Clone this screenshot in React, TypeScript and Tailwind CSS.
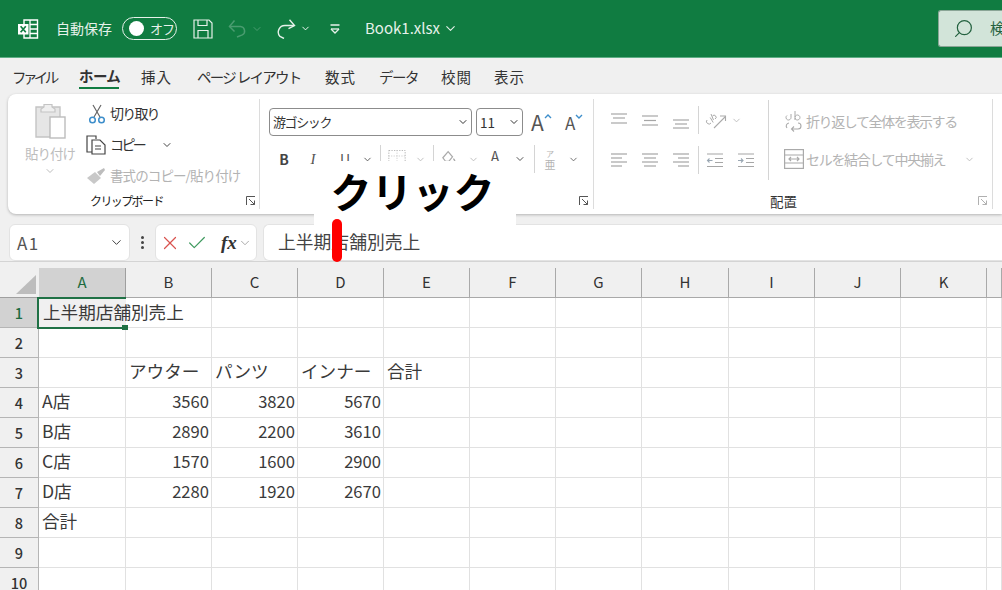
import { ChevronDown, Search, X, Check } from 'lucide-react';

const columns = ['A', 'B', 'C', 'D', 'E', 'F', 'G', 'H', 'I', 'J', 'K', ''];

const rows: Record<number, (string | number)[]> = {
  3: ['', 'アウター', 'パンツ', 'インナー', '合計'],
  4: ['A店', 3560, 3820, 5670],
  5: ['B店', 2890, 2200, 3610],
  6: ['C店', 1570, 1600, 2900],
  7: ['D店', 2280, 1920, 2670],
  8: ['合計'],
};

function Chev({ className = 'text-[#444]', size = 12 }: { className?: string; size?: number }) {
  return <ChevronDown size={size} strokeWidth={2} className={`shrink-0 ${className}`} />;
}

function ExcelLogo() {
  return (
    <svg width="22" height="20" viewBox="0 0 22 20" fill="none" className="shrink-0">
      <path d="M7 1h13.5v18H7z" stroke="#fff" strokeWidth="1.4" />
      <path d="M13 1v18M13 5.5h7.5M13 10h7.5M13 14.5h7.5" stroke="#fff" strokeWidth="1.3" />
      <rect x="1" y="5" width="10.5" height="10.5" fill="#fff" />
      <path d="M3.6 7.3l5.2 6M8.8 7.3l-5.2 6" stroke="#107c41" strokeWidth="1.7" />
    </svg>
  );
}

function LinesIcon({ ys, xs }: { ys: number[]; xs: [number, number][] }) {
  return (
    <svg width="18" height="18" viewBox="0 0 18 18" className="shrink-0">
      {ys.map((y, i) => (
        <path key={i} d={`M${xs[i][0]} ${y}H${xs[i][1]}`} stroke="#a6a6a6" strokeWidth="1.2" />
      ))}
    </svg>
  );
}

function IndentIcon({ right }: { right?: boolean }) {
  return (
    <svg width="18" height="18" viewBox="0 0 18 18" fill="none" className="shrink-0">
      <path d="M1 3h16M9 7.5h8M9 11.5h8M1 15.5h16" stroke="#a6a6a6" strokeWidth="1.2" />
      <path d={right ? 'M1 9.5h5M4 7.5l2 2-2 2' : 'M1.5 9.5h5M3.5 7.5l-2 2 2 2'} stroke="#9aa7b3" strokeWidth="1.1" />
    </svg>
  );
}

function Launcher({ muted }: { muted?: boolean }) {
  const c = muted ? '#b0b0b0' : '#555';
  return (
    <svg width="10" height="10" viewBox="0 0 10 10" fill="none" className="shrink-0">
      <path d="M.5 9V.5H9" stroke={c} />
      <path d="M3 3l5.5 5.5M8.5 4.5v4h-4" stroke={c} />
    </svg>
  );
}

function Sep({ h = 'h-[28px]' }: { h?: string }) {
  return <div className={`w-px shrink-0 bg-[#d4d4d4] ${h}`} />;
}

function GroupLine() {
  return <div className="my-[5px] w-px shrink-0 bg-[#dcdcdc]" />;
}

function TitleBar() {
  return (
    <div className="flex h-[58px] items-center border-b border-[#5fae85] bg-[#107c41] text-[#e6f1ea]">
      <div className="ml-[17px]">
        <ExcelLogo />
      </div>
      <span className="ml-[17px] w-[58px] whitespace-nowrap text-[14px]">自動保存</span>
      <div className="ml-[8px] flex h-[23px] w-[55px] items-center rounded-full border border-[#e6f1ea] pl-[6px]">
        <span className="h-[15px] w-[15px] shrink-0 rounded-full bg-white" />
        <span className="ml-[6px] whitespace-nowrap text-[13px] leading-none tracking-[-1px]">オフ</span>
      </div>
      <svg width="20" height="20" viewBox="0 0 20 20" fill="none" className="ml-[16px]" stroke="#e6f1ea" strokeWidth="1.2">
        <path d="M1 1h15l3 3v15H1z" />
        <path d="M5 1v5.5h9V1M5 19v-7.5h10V19" />
      </svg>
      <svg width="19" height="19" viewBox="0 0 19 19" fill="none" className="ml-[15px]" stroke="#4a9c70" strokeWidth="1.5">
        <path d="M1.5 7.5h11a4.5 4.5 0 0 1 1.8 8.4L9 18" />
        <path d="M6.5 1.5l-5 6 5 5" />
      </svg>
      <Chev className="ml-[4px] text-[#4a9c70]" />
      <svg width="20" height="20" viewBox="0 0 20 20" fill="none" className="ml-[13px]" stroke="#e6f1ea" strokeWidth="1.4">
        <path d="M18 6.5H9a6.6 6.6 0 0 0-5 11l4 2" />
        <path d="M13.5 .8l5 5.7-6 3.2" />
      </svg>
      <Chev className="ml-[4px] text-white" size={11} />
      <svg width="12" height="12" viewBox="0 0 12 12" fill="none" className="ml-[18px]" stroke="#e6f1ea" strokeWidth="1.3">
        <path d="M1.5 2h9M2 6l4 4 4-4" />
        <path d="M2 6h8" />
      </svg>
      <span className="ml-[24px] text-[15px]">Book1.xlsx</span>
      <ChevronDown size={15} strokeWidth={1.7} className="ml-[3px]" />
      <div className="ml-auto flex h-[37px] w-[64px] items-center overflow-hidden rounded-l-[3px] border border-r-0 border-[#8aa596] bg-[#d2e4d9] pl-[14px] text-[#23613f]">
        <Search size={21} strokeWidth={1.4} className="shrink-0 -scale-x-100" />
        <span className="ml-[16px] whitespace-nowrap text-[15px]">検索</span>
      </div>
    </div>
  );
}

function Tabs() {
  const tabs = [
    { label: 'ファイル', w: 'w-[45px]', ml: 'ml-[12px]', t: 'tracking-[-3.6px]' },
    { label: 'ホーム', w: 'w-[40px]', ml: 'ml-[22px]', t: 'font-bold tracking-[-0.6px]', active: true },
    { label: '挿入', w: 'w-[31px]', ml: 'ml-[22px]', t: 'tracking-[1px]' },
    { label: 'ページ レイアウト', w: 'w-[103px]', ml: 'ml-[25px]', t: 'tracking-[-1.7px]' },
    { label: '数式', w: 'w-[31px]', ml: 'ml-[25px]', t: 'tracking-[1px]' },
    { label: 'データ', w: 'w-[38px]', ml: 'ml-[23px]', t: 'tracking-[-1.5px]' },
    { label: '校閲', w: 'w-[31px]', ml: 'ml-[24px]', t: 'tracking-[1px]' },
    { label: '表示', w: 'w-[31px]', ml: 'ml-[22px]', t: 'tracking-[1px]' },
  ];
  return (
    <div className="flex h-[36px] items-center pt-px text-[#333]">
      {tabs.map((t) => (
        <div
          key={t.label}
          className={`flex h-[24px] shrink-0 items-center whitespace-nowrap text-[14.5px] ${t.w} ${t.ml} ${t.t} ${
            t.active ? 'border-b-2 border-[#107c41]' : ''
          }`}
        >
          {t.label}
        </div>
      ))}
    </div>
  );
}

function ClipboardGroup() {
  return (
    <div className="flex h-full w-[251px] shrink-0 flex-col">
      <div className="flex h-[91px]">
        <div className="ml-[17px] mt-[9px] flex w-[50px] flex-col items-center">
          <svg width="34" height="36" viewBox="0 0 34 36" fill="none">
            <path d="M3 4h24v30H3z" fill="#e6e6e6" stroke="#c4c4c4" strokeWidth="1.4" />
            <path d="M11 4V1.5h8V4l3 2v3H8V6z" fill="#efefef" stroke="#c4c4c4" strokeWidth="1.2" />
            <rect x="17" y="14" width="15" height="21" fill="#fff" stroke="#bcbcbc" strokeWidth="1.4" />
          </svg>
          <span className="mt-[5px] whitespace-nowrap text-[13.5px] leading-[18px] tracking-[-1px] text-[#bdbdbd]">貼り付け</span>
          <Chev className="mt-[3px] text-[#bdbdbd]" />
        </div>
        <div className="ml-[11px] flex flex-col pt-[4px]">
          <div className="flex h-[31px] shrink-0 items-center">
            <svg width="18" height="20" viewBox="0 0 18 20" fill="none" className="ml-[2px]">
              <path d="M5 1l7 12M13 1L6 13" stroke="#666" strokeWidth="1.2" />
              <circle cx="4.5" cy="16" r="2.8" stroke="#3d8ecb" strokeWidth="1.5" />
              <circle cx="13.5" cy="16" r="2.8" stroke="#3d8ecb" strokeWidth="1.5" />
            </svg>
            <span className="ml-[4px] whitespace-nowrap text-[14px] tracking-[-1.8px] text-[#333]">切り取り</span>
          </div>
          <div className="flex h-[31px] shrink-0 items-center">
            <svg width="20" height="20" viewBox="0 0 20 20" fill="none" stroke="#444" strokeWidth="1.2">
              <path d="M6 17H1V1h9v3" />
              <path d="M6 5h8l5 5v9H6z" />
              <path d="M9 11h6M9 14h6" />
            </svg>
            <span className="ml-[4px] w-[36px] whitespace-nowrap text-[14px] tracking-[-2.6px] text-[#333]">コピー</span>
            <Chev className="ml-[15px] text-[#444]" />
          </div>
          <div className="flex h-[31px] shrink-0 items-center">
            <svg width="20" height="18" viewBox="0 0 20 18" fill="none">
              <path d="M1 11l8-6 6 6-7 6z" fill="#c8c8c8" />
              <path d="M11 5l7-4 1 2-5 6z" fill="#bdbdbd" />
            </svg>
            <span className="ml-[4px] whitespace-nowrap text-[13.5px] tracking-[-0.9px] text-[#b3b3b3]">書式のコピー/貼り付け</span>
          </div>
        </div>
      </div>
      <div className="flex flex-1 items-center pt-[2px]">
        <span className="ml-[82px] whitespace-nowrap text-[12px] tracking-[-1.6px] text-[#222]">クリップボード</span>
        <div className="ml-auto mr-[3px]">
          <Launcher />
        </div>
      </div>
    </div>
  );
}

function FontGroup() {
  return (
    <div className="flex h-full w-[333px] shrink-0 flex-col">
      <div className="flex h-[91px] flex-col">
        <div className="ml-[9px] mt-[14px] flex h-[28px] items-center">
          <div className="flex h-[28px] w-[203px] items-center justify-between rounded-[4px] border border-[#8c8c8c] pl-[3px] pr-[2px]">
            <span className="text-[13px] tracking-[-1.4px] text-[#333]">游ゴシック</span>
            <Chev className="text-[#333]" />
          </div>
          <div className="ml-[4px] flex h-[28px] w-[47px] items-center justify-between rounded-[4px] border border-[#8c8c8c] pl-[3px] pr-[2px]">
            <span className="text-[13.5px] text-[#333]">11</span>
            <Chev className="text-[#333]" />
          </div>
          <div className="ml-[8px] flex w-[22px] items-start text-[#555]">
            <span className="text-[21px] leading-none">A</span>
            <svg width="8" height="6" viewBox="0 0 8 6" fill="none" className="mt-[2px]"><path d="M1 4l3-3 3 3" stroke="#3d8ecb" strokeWidth="1.4" /></svg>
          </div>
          <div className="ml-[12px] flex w-[19px] items-start text-[#555]">
            <span className="text-[17px] leading-none">A</span>
            <svg width="8" height="6" viewBox="0 0 8 6" fill="none"><path d="M1 1l3 3 3-3" stroke="#3d8ecb" strokeWidth="1.4" /></svg>
          </div>
        </div>
        <div className="ml-[16px] mt-[9px] flex h-[28px] items-center">
          <span className="w-[16px] shrink-0 text-center text-[14px] font-bold text-[#444]">B</span>
          <span className="ml-[14px] w-[14px] shrink-0 text-center font-['Liberation_Serif',serif] text-[15px] italic text-[#555]">I</span>
          <span className="ml-[17px] w-[16px] shrink-0 text-center text-[14px] text-[#555]">U</span>
          <Chev className="ml-[9px] text-[#555]" size={11} />
          <div className="ml-[7px]"><Sep /></div>
          <svg width="20" height="12" viewBox="0 0 20 14" fill="none" className="mb-[6px] ml-[6px] shrink-0">
            <rect x=".5" y=".5" width="19" height="13" stroke="#aaa" strokeDasharray="1.5 1.5" />
            <path d="M10 0v14M0 7h20" stroke="#ccc" strokeDasharray="1.5 1.5" />
          </svg>
          <Chev className="ml-[8px] text-[#bbb]" size={11} />
          <div className="ml-[7px]"><Sep /></div>
          <svg width="18" height="14" viewBox="0 0 18 16" fill="none" className="mb-[6px] ml-[6px] shrink-0">
            <path d="M2 10l6-7 5 6-4 5H5z" stroke="#aaa" strokeWidth="1.4" />
            <path d="M14 11c1.5 1.5 2 3 1 4" stroke="#aaa" strokeWidth="1.6" />
          </svg>
          <Chev className="ml-[10px] text-[#bbb]" size={11} />
          <span className="mb-[6px] ml-[9px] w-[14px] shrink-0 text-center text-[14px] leading-none text-[#555]">A</span>
          <Chev className="ml-[12px] text-[#555]" />
          <div className="ml-[8px]"><Sep /></div>
          <div className="ml-[7px] flex w-[16px] shrink-0 flex-col items-center text-[#b5b5b5]">
            <span className="text-[8px] leading-[9px]">ア</span>
            <span className="text-[11px] leading-[12px]">亜</span>
          </div>
          <Chev className="ml-[10px] text-[#666]" size={11} />
        </div>
      </div>
      <div className="flex flex-1 items-center pt-[2px]">
        <div className="ml-auto mr-[4px]">
          <Launcher />
        </div>
      </div>
    </div>
  );
}

function AlignGroup() {
  return (
    <div className="flex h-full w-[398px] shrink-0 flex-col">
      <div className="flex h-[91px]">
        <div className="ml-[16px] mt-[12px] flex flex-col gap-[12px]">
          <div className="flex h-[28px] items-center">
            <div className="flex w-[88px] items-center gap-[13px]">
              <LinesIcon ys={[3, 7, 12]} xs={[[1, 17], [3, 15], [1, 17]]} />
              <LinesIcon ys={[5, 9.5, 14]} xs={[[1, 17], [3, 15], [1, 17]]} />
              <LinesIcon ys={[9, 13, 17]} xs={[[1, 17], [3, 15], [1, 17]]} />
            </div>
            <Sep />
            <svg width="22" height="18" viewBox="0 0 22 18" fill="none" className="ml-[6px] shrink-0">
              <path d="M9 17L20 6M15 5h5.5v5" stroke="#aaa" strokeWidth="1.1" />
              <path d="M2 9a2.5 2.5 0 1 0 4 3M5.2 6.5l3 5M6 3l2.5 6M7.5 5a2 2 0 1 1 2.5 3" stroke="#aaa" strokeWidth="1" />
            </svg>
            <Chev className="ml-[4px] text-[#bbb]" size={11} />
          </div>
          <div className="flex h-[28px] items-center">
            <div className="flex w-[88px] items-center gap-[13px]">
              <LinesIcon ys={[3, 7, 11, 15]} xs={[[1, 17], [1, 12], [1, 17], [1, 12]]} />
              <LinesIcon ys={[3, 7, 11, 15]} xs={[[1, 17], [3, 15], [1, 17], [3, 15]]} />
              <LinesIcon ys={[3, 7, 11, 15]} xs={[[1, 17], [6, 17], [1, 17], [6, 17]]} />
            </div>
            <Sep />
            <div className="ml-[7px] flex items-center gap-[13px]">
              <IndentIcon />
              <IndentIcon right />
            </div>
          </div>
        </div>
        <div className="ml-[13px] mt-[6px] h-[80px] w-px shrink-0 bg-[#d4d4d4]" />
        <div className="ml-[15px] mt-[13px] flex flex-col gap-[10px]">
          <div className="flex h-[28px] items-center">
            <svg width="20" height="22" viewBox="0 0 20 22" fill="none" className="shrink-0">
              <path d="M3 5.5a2.5 2.5 0 1 0 4 2V4M11 1v9M11 7a2.5 2.5 0 1 1 0 1" stroke="#aaa" strokeWidth="1" />
              <path d="M14 13a3 3 0 0 1 0 6H8M10 16.5L7.5 19l2.5 2.5M5 13a3 3 0 0 0-2 5" stroke="#aaa" strokeWidth="1.1" />
            </svg>
            <span className="ml-[2px] whitespace-nowrap text-[14px] tracking-[-1.4px] text-[#b3b3b3]">折り返して全体を表示する</span>
          </div>
          <div className="flex h-[28px] items-center">
            <svg width="20" height="20" viewBox="0 0 20 20" fill="none" stroke="#aaa" strokeWidth="1.2" className="shrink-0">
              <rect x=".6" y=".6" width="18.8" height="18.8" />
              <path d="M.6 6h18.8M.6 14h18.8M5 10h10M7 8l-2 2 2 2M13 8l2 2-2 2" />
            </svg>
            <span className="ml-[2px] w-[158px] whitespace-nowrap text-[14px] tracking-[-1.3px] text-[#b3b3b3]">セルを結合して中央揃え</span>
            <Chev className="text-[#bbb]" size={11} />
          </div>
        </div>
      </div>
      <div className="flex flex-1 items-center pt-[3px]">
        <span className="ml-[176px] whitespace-nowrap text-[13.5px] text-[#333]">配置</span>
        <div className="ml-auto mr-[4px]">
          <Launcher muted />
        </div>
      </div>
    </div>
  );
}

function FormulaBar() {
  return (
    <div className="flex h-[37px] items-stretch">
      <div className="ml-[9px] flex w-[121px] items-center justify-between rounded-[6px] border border-[#e3e3e3] bg-white pl-[7px] pr-[5px]">
        <span className="text-[17px] tracking-[1.5px] text-[#555]">A1</span>
        <ChevronDown size={15} strokeWidth={1.5} className="text-[#333]" />
      </div>
      <div className="flex w-[25px] flex-col items-center justify-center gap-[2px]">
        <span className="h-[3px] w-[3px] rounded-full bg-[#444]" />
        <span className="h-[3px] w-[3px] rounded-full bg-[#444]" />
        <span className="h-[3px] w-[3px] rounded-full bg-[#444]" />
      </div>
      <div className="flex w-[102px] items-center rounded-[6px] border border-[#e3e3e3] bg-white pl-[3px]">
        <X size={22} strokeWidth={1.3} className="text-[#d9534f]" />
        <Check size={22} strokeWidth={1.3} className="ml-[5px] text-[#3f9a5f]" />
        <span className="ml-[13px] font-['Liberation_Serif',serif] text-[19px] font-bold italic leading-none text-[#333]">fx</span>
        <ChevronDown size={14} strokeWidth={1.4} className="ml-px text-[#999]" />
      </div>
      <div className="ml-[6px] flex flex-1 items-center rounded-l-[6px] border border-r-0 border-[#e3e3e3] bg-white pb-[2px] pl-[14px]">
        <span className="text-[17.8px] leading-none text-[#444]">上半期店舗別売上</span>
      </div>
    </div>
  );
}

function Sheet() {
  const rowNumbers = [1, 2, 3, 4, 5, 6, 7, 8, 9, 10];
  return (
    <div className="grid grid-cols-[39px_87px_86px_86px_86px_86px_86px_86px_87px_86px_86px_86px_15px] auto-rows-[30px]">
      <div className="flex items-end justify-end border-b border-[#9f9f9f] bg-[#f0f0f0] pb-[3px] pr-[3px]">
        <svg width="20" height="19" viewBox="0 0 20 19"><path d="M20 0v19H0z" fill="#bdbdbd" /></svg>
      </div>
      {columns.map((c, i) => (
        <div
          key={i}
          className={`flex items-center justify-center border-b border-r text-[15px] ${
            i === 0 ? 'border-[#9f9f9f] bg-[#d2d2d2] text-[#1d6b40]' : 'border-[#a9a9a9] bg-[#f0f0f0] text-[#333]'
          }`}
        >
          {c}
        </div>
      ))}
      {rowNumbers.map((n) => (
        <Row key={n} n={n} />
      ))}
    </div>
  );
}

function Row({ n }: { n: number }) {
  const values = rows[n] ?? [];
  return (
    <>
      <div
        className={`flex items-center justify-center border-b border-r border-[#b5b5b5] text-[14.5px] font-medium ${
          n === 1 ? 'bg-[#d2d2d2] text-[#1d6b40]' : 'bg-[#f0f0f0] text-[#333]'
        }`}
      >
        {n}
      </div>
      {columns.map((_, i) => {
        if (n === 1 && i === 0) {
          return (
            <div
              key={i}
              className="relative z-10 -mb-px -ml-[2px] -mt-px flex items-center whitespace-nowrap border-y-2 border-l-2 border-[#1f7145] pb-[2px] pl-[4px] text-[17.6px] text-[#3a3a3a]"
            >
              上半期店舗別売上
              <span className="absolute -bottom-[3px] -right-[2px] h-[5px] w-[6px] bg-[#1f7145]" />
            </div>
          );
        }
        const v = values[i];
        const numeric = typeof v === 'number';
        return (
          <div
            key={i}
            className={`flex items-center whitespace-nowrap border-b border-r border-[#e1e1e1] bg-white pb-[3px] text-[#3a3a3a] ${
              numeric ? 'justify-end pr-[2px] text-[16.6px]' : 'pl-[3px] text-[17.6px]'
            }`}
          >
            {v}
          </div>
        );
      })}
    </>
  );
}

export default function App() {
  return (
    <div className="relative h-[590px] w-[1002px] overflow-hidden bg-[#f0f0f0] font-['Noto_Sans_CJK_JP','Noto_Sans',sans-serif]">
      <TitleBar />
      <Tabs />
      <div className="ml-[8px] flex h-[120px] rounded-l-[8px] bg-white shadow-[0_1px_3px_rgba(0,0,0,0.25)]">
        <ClipboardGroup />
        <GroupLine />
        <FontGroup />
        <GroupLine />
        <AlignGroup />
        <GroupLine />
      </div>
      <div className="h-[10px]" />
      <FormulaBar />
      <div className="h-[7px] border-t border-[#d4d4d4]" />
      <Sheet />

      {/* caption pasted over the ribbon */}
      <div className="absolute left-[314px] top-[161px] flex h-[64px] w-[202px] items-start justify-center bg-white pr-[5px] text-[41px] font-bold leading-[58px] text-black">
        クリック
      </div>
      <div className="absolute left-[332px] top-[219px] h-[43px] w-[10px] rounded-full bg-[#ff0000]" />
    </div>
  );
}
